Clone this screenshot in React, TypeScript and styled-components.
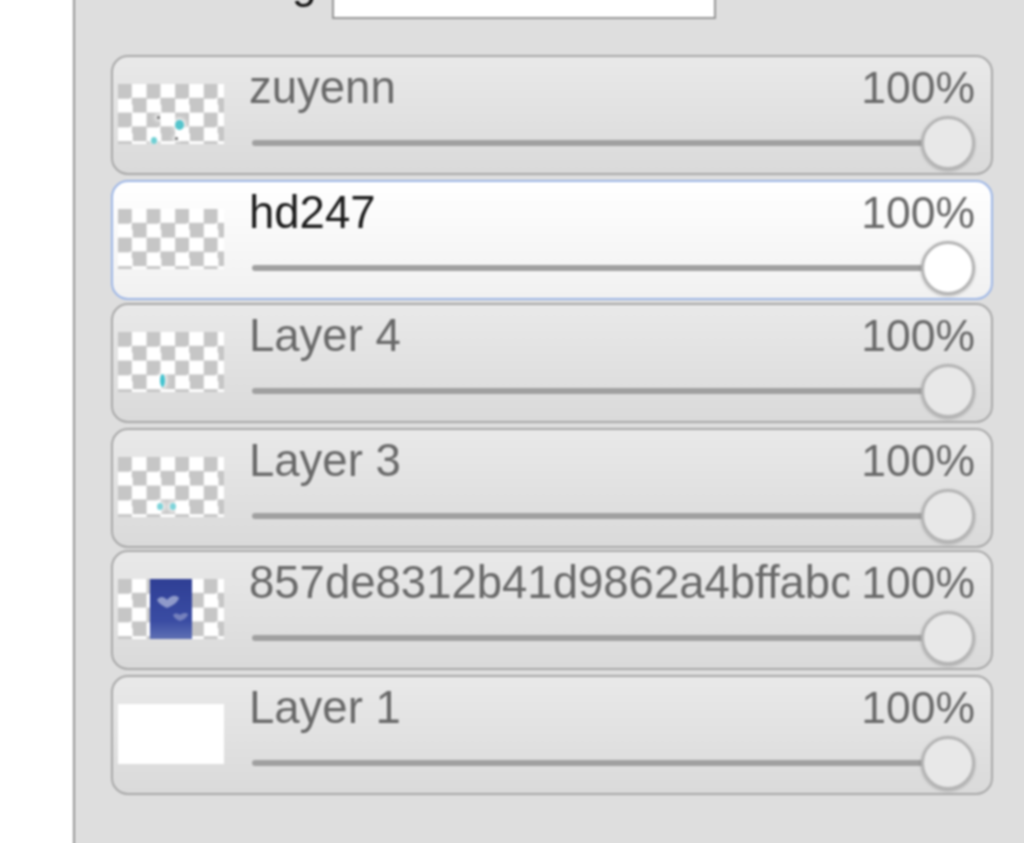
import React from "react";
import styled, { createGlobalStyle } from "styled-components";

const GlobalStyle = createGlobalStyle`
  html, body {
    margin: 0;
    height: 100%;
    overflow: hidden;
    background: #ffffff;
    font-family: "Liberation Sans", Arial, sans-serif;
  }
`;

// a little larger than the window, so the blur does not fade at the edges
const Page = styled.div`
  width: 1030px;
  height: 853px;
  margin-top: -5px;
  padding-left: 73px;
  box-sizing: border-box;
  overflow: hidden;
  background: #ffffff;
  filter: blur(0.9px);
`;

const Panel = styled.div`
  width: 957px;
  height: 853px;
  box-sizing: border-box;
  border-left: 2px solid #969696;
  background: #dedede;
  padding-left: 36px;
`;

const NameRow = styled.div`
  height: 60px;
  display: flex;
  align-items: flex-start;
  box-sizing: border-box;
  padding-left: 181px;
  gap: 16px;
  overflow: hidden;
`;

const NameLabel = styled.span`
  font-size: 44px;
  line-height: 44px;
  margin-top: -34px;
  color: #111111;
`;

const NameInput = styled.div`
  width: 384px;
  height: 24px;
  box-sizing: border-box;
  background: #ffffff;
  border: 2px solid #969696;
  border-top: none;
`;

const LayerList = styled.div`
  width: 882px;
  display: flex;
  flex-direction: column;
`;

const LayerRow = styled.div<{ $active?: boolean; $gap: number }>`
  height: 120px;
  margin-bottom: ${(p) => p.$gap}px;
  box-sizing: border-box;
  display: flex;
  padding: 0 16px 0 5px;
  border-radius: 17px;
  border: 2px solid ${(p) => (p.$active ? "#9db6e6" : "#a8a8a8")};
  background: ${(p) =>
    p.$active
      ? "linear-gradient(#ffffff, #f1f1f1)"
      : "linear-gradient(#e9e9e9, #dadada)"};
`;

const Thumb = styled.div<{ $plain?: boolean }>`
  position: relative;
  flex: none;
  align-self: center;
  width: 106px;
  height: 60px;
  margin-top: -2px;
  overflow: hidden;
  background-color: #ffffff;
  background-image: ${(p) =>
    p.$plain
      ? "none"
      : "conic-gradient(#ffffff 25%, #c6c6c6 0 50%, #ffffff 0 75%, #c6c6c6 0)"};
  background-size: 28.6px 28.6px;
`;

const Speck = styled.i<{ $x: number; $y: number; $w: number; $h: number; $color: string }>`
  position: absolute;
  left: ${(p) => p.$x}px;
  top: ${(p) => p.$y}px;
  width: ${(p) => p.$w}px;
  height: ${(p) => p.$h}px;
  border-radius: 50%;
  background: ${(p) => p.$color};
  box-shadow: 0 0 4px 2px rgba(255, 255, 255, 0.9);
`;

const Picture = styled.svg`
  position: absolute;
  left: 32px;
  top: 0;
  width: 42px;
  height: 60px;
`;

const Body = styled.div`
  flex: 1;
  min-width: 0;
  margin-left: 25px;
  display: flex;
  flex-direction: column;
`;

const TextLine = styled.div`
  height: 66px;
  display: flex;
  justify-content: space-between;
  align-items: center;
  gap: 12px;
  padding-bottom: 4px;
  box-sizing: border-box;
`;

const LayerName = styled.span<{ $active?: boolean }>`
  flex: 1;
  min-width: 0;
  overflow: hidden;
  white-space: nowrap;
  font-size: 45.5px;
  color: ${(p) => (p.$active ? "#1c1c1c" : "#696969")};
`;

const Percent = styled.span`
  flex: none;
  font-size: 44.5px;
  color: #696969;
`;

const Track = styled.div`
  position: relative;
  height: 6px;
  margin: 17px 0 0 3px;
  border-radius: 3px;
  background: #a0a0a0;
`;

const Knob = styled.div<{ $active?: boolean }>`
  position: absolute;
  right: 0;
  top: -24px;
  width: 54px;
  height: 54px;
  box-sizing: border-box;
  border-radius: 50%;
  border: 3px solid #b5b5b5;
  background: ${(p) => (p.$active ? "#ffffff" : "#e8e8e8")};
  box-shadow: 0 1px 3px rgba(0, 0, 0, 0.25);
`;

type Layer = {
  name: string;
  gap: number;
  active?: boolean;
  plain?: boolean;
  picture?: boolean;
  specks?: { x: number; y: number; w: number; h: number; color: string }[];
};

const layers: Layer[] = [
  {
    name: "zuyenn",
    gap: 5,
    specks: [
      { x: 57, y: 36, w: 9, h: 10, color: "#55c4cc" },
      { x: 33, y: 53, w: 6, h: 7, color: "#6fd0d4" },
      { x: 39, y: 32, w: 3, h: 3, color: "#666666" },
      { x: 57, y: 53, w: 3, h: 3, color: "#666666" },
    ],
  },
  { name: "hd247", gap: 3, active: true },
  {
    name: "Layer 4",
    gap: 5,
    specks: [{ x: 42, y: 42, w: 5, h: 13, color: "#43c3cf" }],
  },
  {
    name: "Layer 3",
    gap: 2,
    specks: [
      { x: 39, y: 46, w: 6, h: 7, color: "#7fd4da" },
      { x: 52, y: 46, w: 6, h: 7, color: "#7fd4da" },
    ],
  },
  { name: "857de8312b41d9862a4bffabc3e1", gap: 5, picture: true },
  { name: "Layer 1", gap: 0, plain: true },
];

export default function App() {
  return (
    <Page>
      <GlobalStyle />
      <Panel>
        <NameRow>
          <NameLabel>g</NameLabel>
          <NameInput />
        </NameRow>
        <LayerList>
          {layers.map((layer) => (
            <LayerRow key={layer.name} $active={layer.active} $gap={layer.gap}>
              <Thumb $plain={layer.plain}>
                {layer.specks?.map((s) => (
                  <Speck
                    key={`${s.x}-${s.y}`}
                    $x={s.x}
                    $y={s.y}
                    $w={s.w}
                    $h={s.h}
                    $color={s.color}
                  />
                ))}
                {layer.picture && (
                  <Picture viewBox="0 0 42 60">
                    <defs>
                      <linearGradient id="sky" x1="0" y1="0" x2="0" y2="1">
                        <stop offset="0" stopColor="#2f3f95" />
                        <stop offset="0.7" stopColor="#3a4ca3" />
                        <stop offset="1" stopColor="#5f70b4" />
                      </linearGradient>
                    </defs>
                    <rect width="42" height="60" fill="url(#sky)" />
                    <path
                      d="M7 21c3-5 8-3 10 0 3-4 9-6 12-2-2 6-8 8-12 10-4-2-8-4-10-8z"
                      fill="#8f9aca"
                    />
                    <path
                      d="M23 36c3-3 6-1 7 0 2-2 6-3 8-1-1 4-5 6-8 7-3-1-6-3-7-6z"
                      fill="#7581bd"
                    />
                  </Picture>
                )}
              </Thumb>
              <Body>
                <TextLine>
                  <LayerName $active={layer.active}>{layer.name}</LayerName>
                  <Percent>100%</Percent>
                </TextLine>
                <Track>
                  <Knob $active={layer.active} />
                </Track>
              </Body>
            </LayerRow>
          ))}
        </LayerList>
      </Panel>
    </Page>
  );
}
